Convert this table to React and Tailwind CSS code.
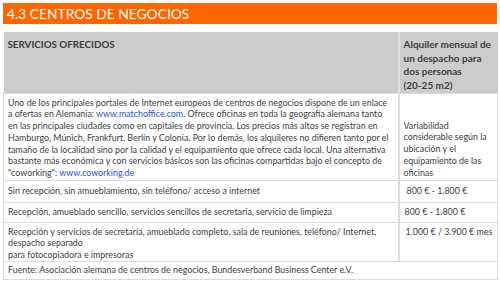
const ROWS = [
  { service: 'Sin recepción, sin amueblamiento, sin teléfono/ acceso a internet', price: '800 € - 1.800 €', h: 'h-[22px]', pad: 'pl-[7px]' },
  { service: 'Recepción, amueblado sencillo, servicios sencillos de secretaría, servicio de limpieza', price: '800 € - 1.800 €', h: 'h-[20px]', pad: 'pl-[5px]' },
];

const PRICE_HEAD = ['Alquiler mensual de', 'un despacho para', 'dos personas', '(20-25 m2)'];

const Link = ({ children }) => <span className="text-[#2a4fd6]">{children}</span>;

const INTRO = [
  'Uno de los principales portales de Internet europeos de centros de negocios dispone de un enlace',
  <>a ofertas en Alemania: <Link>www.matchoffice.com</Link>. Ofrece oficinas en toda la geografía alemana tanto</>,
  'en las principales ciudades como en capitales de provincia. Los precios más altos se registran en',
  'Hamburgo, Múnich, Frankfurt, Berlín y Colonia. Por lo demás, los alquileres no difieren tanto por el',
  'tamaño de la localidad sino por la calidad y el equipamiento que ofrece cada local. Una alternativa',
  'bastante más económica y con servicios básicos son las oficinas compartidas bajo el concepto de',
  <>"coworking": <Link>www.coworking.de</Link></>,
];

export default function App() {
  return (
    <div className="w-[500px] h-[287px] bg-white font-['Lato',sans-serif] text-[#3d3d3d] pt-[3px] px-[3px]">
      <div className="h-[21px] bg-[#ff6600] text-white text-[13.8px] leading-[21px] pl-[4px]">
        4.3 CENTROS DE NEGOCIOS
      </div>

      <table className="mt-[8px] w-[494px] border-collapse text-[8.9px] leading-[11.8px] table-fixed">
        <colgroup>
          <col className="w-[395px]" />
          <col className="w-[99px]" />
        </colgroup>
        <thead>
          <tr className="bg-[#cccccc] h-[61px]">
            <th className="align-top text-left font-bold text-[9.8px] leading-[13px] px-[4px] pt-[6px] border-r-2 border-[#e2e2e2]">
              SERVICIOS OFRECIDOS
            </th>
            <th className="align-top text-left font-bold text-[10px] leading-[13.5px] pl-[4px] pt-[6px]">
              {PRICE_HEAD.map((line) => (
                <div key={line} className="whitespace-nowrap">{line}</div>
              ))}
            </th>
          </tr>
        </thead>
        <tbody>
          <tr className="h-[87px]">
            <td className="align-top px-[4px] pt-[3px] border border-[#dcdcdc] border-r-2">
              {INTRO.map((line, i) => (
                <div key={i} className="whitespace-nowrap">{line}</div>
              ))}
            </td>
            <td className="align-top pl-[4px] pr-[1px] pt-[26px] border border-[#dcdcdc]">
              Variabilidad considerable según la ubicación y el equipamiento de las oficinas
            </td>
          </tr>
          {ROWS.map((row) => (
            <tr key={row.service} className={row.h}>
              <td className="align-middle px-[4px] border border-[#dcdcdc] border-r-2">{row.service}</td>
              <td className={`align-middle ${row.pad} border border-[#dcdcdc]`}>{row.price}</td>
            </tr>
          ))}
          <tr className="h-[38px]">
            <td className="align-top px-[4px] pt-[3px] border border-[#dcdcdc] border-r-2">
              Recepción y servicios de secretaría, amueblado completo, sala de reuniones, teléfono/ Internet,
              <br />
              despacho separado
              <br />
              para fotocopiadora e impresoras
            </td>
            <td className="align-top pl-[6px] pt-[3px] border border-[#dcdcdc]">1.000 € / 3.900 € mes</td>
          </tr>
          <tr className="h-[18px]">
            <td colSpan={2} className="align-middle px-[4px] border border-[#dcdcdc]">
              Fuente: Asociación alemana de centros de negocios, Bundesverband Business Center e.V.
            </td>
          </tr>
        </tbody>
      </table>
    </div>
  );
}
